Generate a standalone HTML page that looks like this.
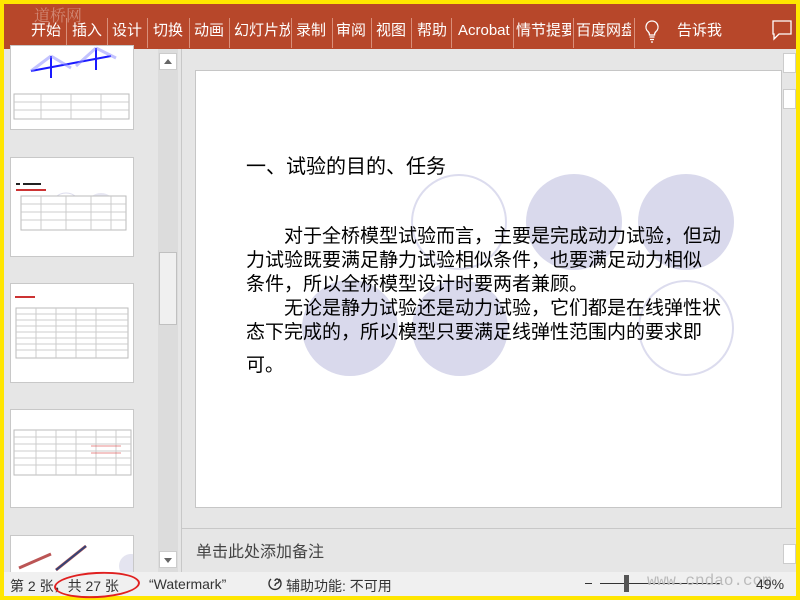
<!DOCTYPE html>
<html><head><meta charset="utf-8"><style>
*{margin:0;padding:0;box-sizing:border-box}
body{width:800px;height:600px;background:#ffe600;position:relative;overflow:hidden;font-family:"Liberation Sans","Noto Sans CJK SC",sans-serif}
.abs{position:absolute}
#ribbon{left:4px;top:4px;width:792px;height:45px;background:#b7472a}
.tab{position:absolute;top:17px;color:#fff;font-size:15px;white-space:nowrap;overflow:hidden;line-height:20px}
.sep{position:absolute;top:14px;width:1px;height:30px;background:#d98f7a}
#main{left:4px;top:49px;width:792px;height:523px;background:#e6e6e6}
.thumb{position:absolute;left:6px;width:124px;background:#fff;border:1px solid #c8c8c8;overflow:hidden}
.circ{position:absolute;border-radius:50%;width:96px;height:96px}
.f{background:#d9d9ec}
.o{border:2px solid #dcdcee}
#status{left:4px;top:572px;width:792px;height:24px;background:#f0f0f0;font-size:14px;color:#333}
</style></head><body>
<div id="ribbon" class="abs">
<div class="tab" style="left:30px;top:1px;color:rgba(255,255,255,.35);font-family:'Noto Serif CJK SC',serif;font-size:16px">道桥网</div>
<div class="tab" style="left:27px">开始</div><div class="sep" style="left:62px"></div>
<div class="tab" style="left:68px">插入</div><div class="sep" style="left:103px"></div>
<div class="tab" style="left:108px">设计</div><div class="sep" style="left:143px"></div>
<div class="tab" style="left:149px">切换</div><div class="sep" style="left:185px"></div>
<div class="tab" style="left:190px">动画</div><div class="sep" style="left:225px"></div>
<div class="tab" style="left:230px;width:56px">幻灯片放</div><div class="sep" style="left:287px"></div>
<div class="tab" style="left:292px">录制</div><div class="sep" style="left:328px"></div>
<div class="tab" style="left:332px">审阅</div><div class="sep" style="left:367px"></div>
<div class="tab" style="left:372px">视图</div><div class="sep" style="left:407px"></div>
<div class="tab" style="left:413px">帮助</div><div class="sep" style="left:447px"></div>
<div class="tab" style="left:454px;width:53px">Acrobat</div><div class="sep" style="left:509px"></div>
<div class="tab" style="left:512px;width:55px">情节提要</div><div class="sep" style="left:569px"></div>
<div class="tab" style="left:572px;width:55px">百度网盘</div><div class="sep" style="left:630px"></div>
<svg class="abs" style="left:640px;top:16px" width="16" height="24" viewBox="0 0 16 24"><path d="M8 1a6 6 0 0 0-4 10.5c1 1 1.5 2 1.5 3.5h5c0-1.5.5-2.5 1.5-3.5A6 6 0 0 0 8 1z M5.5 17h5 M6 19.5h4 M7 22h2" fill="none" stroke="#fff" stroke-width="1.3"/></svg>
<div class="tab" style="left:673px">告诉我</div>
<svg class="abs" style="left:768px;top:16px" width="20" height="22" viewBox="0 0 20 22"><path d="M1 1h18v13H7l-5 5v-5H1z" fill="none" stroke="#fff" stroke-width="1.3"/></svg>
</div>
<div id="main" class="abs">
<div class="thumb" style="top:-4px;height:85px">
<svg width="124" height="85"><path d="M20 25 L100 10" stroke="#1a1aff" stroke-width="2"/><path d="M40 10v22M85 2v22" stroke="#1a1aff" stroke-width="2"/><path d="M40 10L20 25M40 10L60 22M85 2L65 20M85 2L105 12" stroke="#8888ff" stroke-width="3" opacity=".5"/><rect x="3" y="48" width="115" height="25" fill="none" stroke="#bbb"/><path d="M3 56h115M3 64h115M30 48v25M60 48v25M90 48v25" stroke="#ccc"/></svg></div>
<div class="thumb" style="top:108px;height:100px">
<svg width="124" height="100"><rect x="5" y="25" width="4" height="2" fill="#222"/><rect x="12" y="25" width="18" height="2" fill="#222"/><rect x="5" y="31" width="30" height="2" fill="#c33"/><circle cx="55" cy="50" r="15" fill="none" stroke="#dde"/><circle cx="90" cy="50" r="15" fill="#e6e6f2"/><rect x="10" y="38" width="105" height="34" fill="#fff" stroke="#bbb"/><path d="M10 46h105M10 54h105M10 62h105M30 38v34M55 38v34M80 38v34M100 38v34" stroke="#ccc"/></svg></div>
<div class="thumb" style="top:234px;height:100px">
<svg width="124" height="100"><rect x="4" y="12" width="20" height="2" fill="#c33"/><rect x="5" y="24" width="112" height="50" fill="#fff" stroke="#bbb"/><path d="M5 30h112M5 36h112M5 42h112M5 48h112M5 54h112M5 60h112M5 66h112M25 24v50M45 24v50M65 24v50M85 24v50" stroke="#ccc"/></svg></div>
<div class="thumb" style="top:360px;height:99px">
<svg width="124" height="99"><rect x="3" y="20" width="117" height="45" fill="#fff" stroke="#bbb"/><path d="M3 27h117M3 34h117M3 41h117M3 48h117M3 55h117M25 20v45M45 20v45M65 20v45M85 20v45M105 20v45" stroke="#ccc"/><path d="M80 36h30M80 43h30" stroke="#d44" opacity=".6"/></svg></div>
<div class="thumb" style="top:486px;height:40px">
<svg width="124" height="40"><path d="M8 32L40 18M45 34L75 10" stroke="#b55" stroke-width="3"/><path d="M45 34L75 10" stroke="#347" stroke-width="2"/><circle cx="120" cy="30" r="12" fill="#e4e4f0"/></svg></div>
<div class="abs" style="left:154px;top:0;width:20px;height:523px;background:#dcdcdc"></div>
<div class="abs" style="left:155px;top:4px;width:18px;height:17px;background:#fff;border:1px solid #ccc"></div>
<div class="abs" style="left:160px;top:10px;width:0;height:0;border-left:4px solid transparent;border-right:4px solid transparent;border-bottom:5px solid #666"></div>
<div class="abs" style="left:155px;top:203px;width:18px;height:73px;background:#f0f0f0;border:1px solid #c0c0c0"></div>
<div class="abs" style="left:155px;top:502px;width:18px;height:17px;background:#fff;border:1px solid #ccc"></div>
<div class="abs" style="left:160px;top:509px;width:0;height:0;border-left:4px solid transparent;border-right:4px solid transparent;border-top:5px solid #666"></div>
<div class="abs" style="left:177px;top:0;width:1px;height:523px;background:#c8c8c8"></div>
<div class="abs" style="left:191px;top:21px;width:587px;height:438px;background:#fff;border:1px solid #c6c6c6;overflow:hidden">
<div class="circ o" style="left:215px;top:103px"></div>
<div class="circ f" style="left:330px;top:103px"></div>
<div class="circ f" style="left:442px;top:103px"></div>
<div class="circ f" style="left:106px;top:209px"></div>
<div class="circ f" style="left:216px;top:209px"></div>
<div class="circ o" style="left:442px;top:209px"></div>
<div class="abs" style="left:50px;top:79px;font-size:20px;color:#000;white-space:nowrap">一、试验的目的、任务</div>
<div class="abs" style="left:50px;top:154px;width:490px;font-size:19px;line-height:24px;color:#000">
<div style="text-indent:38px;white-space:nowrap">对于全桥模型试验而言，主要是完成动力试验，但动</div>
<div style="white-space:nowrap">力试验既要满足静力试验相似条件，也要满足动力相似</div>
<div style="white-space:nowrap">条件，所以全桥模型设计时要两者兼顾。</div>
<div style="text-indent:38px;white-space:nowrap">无论是静力试验还是动力试验，它们都是在线弹性状</div>
<div style="white-space:nowrap">态下完成的，所以模型只要满足线弹性范围内的要求即</div>
<div style="white-space:nowrap;margin-top:9px">可。</div>
</div>
</div>
<div class="abs" style="left:779px;top:4px;width:13px;height:20px;background:#fff;border:1px solid #ccc"></div>
<div class="abs" style="left:779px;top:40px;width:13px;height:20px;background:#fff;border:1px solid #ccc"></div>
<div class="abs" style="left:178px;top:479px;width:614px;height:1px;background:#c8c8c8"></div>
<div class="abs" style="left:192px;top:489px;font-size:16px;color:#444">单击此处添加备注</div>
<div class="abs" style="left:779px;top:495px;width:13px;height:20px;background:#fff;border:1px solid #ccc"></div>
</div>
<div id="status" class="abs">
<div class="abs" style="left:6px;top:4px;white-space:nowrap">第 2 张，共 27 张</div>
<div class="abs" style="left:145px;top:4px;white-space:nowrap">“Watermark”</div>
<svg class="abs" style="left:263px;top:4px" width="16" height="17" viewBox="0 0 16 17"><path d="M4 3a6 6 0 1 0 8 0M8 5a2 2 0 1 1 2 2c-1 .5-2 1-2 3M8 13v1" fill="none" stroke="#333" stroke-width="1.4"/></svg>
<div class="abs" style="left:282px;top:4px;white-space:nowrap">辅助功能: 不可用</div>
<div class="abs" style="left:50px;top:0px;width:86px;height:26px;border:2.5px solid #e02020;border-radius:50%;transform:rotate(-3deg)"></div>
<div class="abs" style="left:581px;top:11px;width:7px;height:1px;background:#333"></div>
<div class="abs" style="left:596px;top:11px;width:120px;height:1px;background:#333"></div>
<div class="abs" style="left:620px;top:3px;width:5px;height:17px;background:#555"></div>
<div class="abs" style="left:643px;top:0;font-size:16px;color:#bbb;font-family:'Liberation Mono',monospace;white-space:nowrap">www.cndao.com</div>
<div class="abs" style="left:752px;top:4px">49%</div>
</div>
</body></html>
